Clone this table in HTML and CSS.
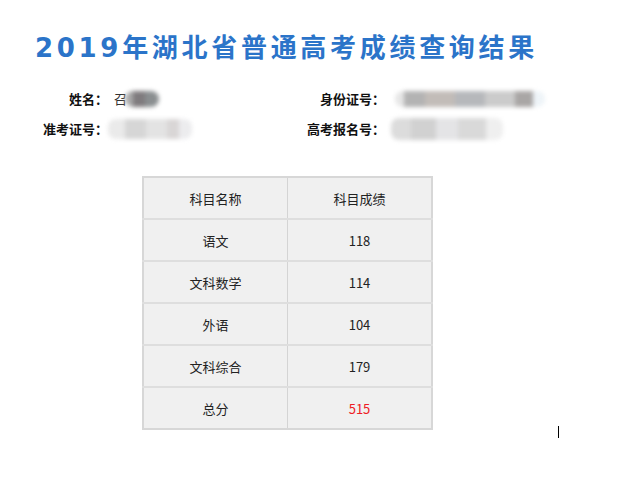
FILE: index.html
```html
<!DOCTYPE html>
<html lang="zh">
<head>
<meta charset="utf-8">
<link rel="stylesheet" href="styles.css">
</head>
<body>
<div class="page">
  <h1 class="title">2019年湖北省普通高考成绩查询结果</h1>
  <div class="info">
    <div class="label">姓名：</div>
    <div class="value"><span class="name-char">召</span><span class="blur blur-name"></span></div>
    <div class="label">身份证号：</div>
    <div class="value"><span class="blur blur-id"></span></div>
    <div class="label">准考证号：</div>
    <div class="value"><span class="blur blur-zk"></span></div>
    <div class="label">高考报名号：</div>
    <div class="value"><span class="blur blur-bm"></span></div>
  </div>
  <table class="scores">
    <tr><td>科目名称</td><td>科目成绩</td></tr>
    <tr><td>语文</td><td>118</td></tr>
    <tr><td>文科数学</td><td>114</td></tr>
    <tr><td>外语</td><td>104</td></tr>
    <tr><td>文科综合</td><td>179</td></tr>
    <tr><td>总分</td><td class="total">515</td></tr>
  </table>
  <span class="caret"></span>
</div>
</body>
</html>
```
FILE: styles.css
```css
html, body {
  margin: 0;
  padding: 0;
  background: #ffffff;
}
.page {
  position: relative;
  width: 620px;
  height: 497px;
  font-family: "Noto Sans CJK SC", "DejaVu Sans", sans-serif;
  color: #222;
}
.title {
  margin: 0;
  padding: 32px 0 0 35px;
  font-family: "DejaVu Sans", "Noto Sans CJK SC", sans-serif;
  font-size: 26px;
  line-height: 32px;
  font-weight: bold;
  letter-spacing: 3.7px;
  color: #2b74c9;
}
.info {
  display: grid;
  grid-template-columns: 75px 131px 134px 1fr;
  column-gap: 6px;
  row-gap: 8px;
  margin: 24px 0 0 33px;
  font-size: 13px;
  line-height: 22px;
}
.label {
  text-align: right;
  font-weight: bold;
  color: #111;
}
.value {
  display: flex;
  align-items: center;
}
.name-char {
  color: #333;
  font-size: 13px;
}
.blur {
  display: inline-block;
  filter: blur(2px);
  border-radius: 8px;
}
.blur-name {
  width: 34px;
  height: 16px;
  margin-left: -2px;
  background: linear-gradient(90deg, #aaa 0 25%, #7f7b7e 25% 60%, #8a8e90 60% 100%);
}
.blur-id {
  width: 150px;
  height: 16px;
  margin-left: 4px;
  background: linear-gradient(90deg, #e6e6e6 0 6%, #b3b3b3 6% 20%, #c2bcb8 20% 40%, #b6b8bb 40% 60%, #cbcbcb 60% 80%, #a9a6a5 80% 92%, #eef4f8 92% 100%);
}
.blur-zk {
  width: 84px;
  height: 20px;
  margin-left: -6px;
  background: linear-gradient(90deg, #eaeaea 0 20%, #d6d6d6 20% 45%, #e3e3e3 45% 70%, #d9d6d6 70% 85%, #ececee 85% 100%);
}
.blur-bm {
  width: 112px;
  height: 22px;
  margin-left: 0;
  background: linear-gradient(90deg, #dcdcdc 0 18%, #d1d1d1 18% 40%, #e4e4e6 40% 60%, #d9d9d9 60% 85%, #efefef 85% 100%);
}
.scores {
  margin: 36px 0 0 142px;
  border-collapse: collapse;
  border: 2px solid #d7d7d7;
  background: #f0f0f0;
  font-size: 13px;
}
.scores td {
  width: 143px;
  height: 40px;
  padding: 0;
  text-align: center;
  border-top: 2px solid #dedede;
  border-left: 1px solid #d4d4d4;
  color: #222;
}
.scores tr:first-child td {
  border-top: none;
}
.scores td:first-child {
  border-left: none;
}
.scores .total {
  color: #ee1c25;
}
.caret {
  position: absolute;
  left: 558px;
  top: 426px;
  width: 1px;
  height: 12px;
  background: #000;
}
```
